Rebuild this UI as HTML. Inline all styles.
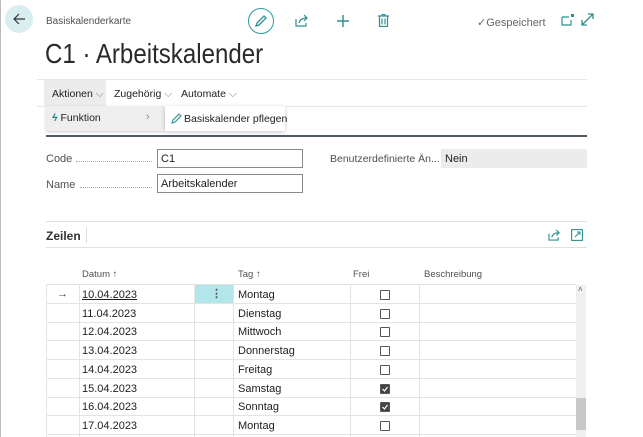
<!DOCTYPE html>
<html><head><meta charset="utf-8"><style>
*{margin:0;padding:0;box-sizing:border-box}
body{width:643px;height:437px;background:#fff;font-family:"Liberation Sans",sans-serif;color:#212121;position:relative;overflow:hidden;font-size:11px}
.a{position:absolute}
.t{white-space:nowrap}
.g{color:#505050}
.dots{border-bottom:1px dotted #aaa}
.inp{border:1px solid #8a8a8a;background:#fff;padding:3px 0 0 3px;height:19px}
.row{position:absolute;left:46px;width:530px;height:19px;border-bottom:1px solid #e4e4e4}
.cb{position:absolute;left:334px;width:10px;height:10px;border:1px solid #555;border-radius:1px}
.cb.on{background:#444}
</style></head><body>
<div class="a" style="left:0;top:0;width:1px;height:437px;background:#bbb"></div>
<div class="a" style="left:5px;top:5px;width:28px;height:28px;border-radius:50%;background:#d9eef0"></div>
<svg class="a" style="left:12px;top:12px" width="14" height="14" viewBox="0 0 14 14"><path d="M13 7H2M7 2L2 7l5 5" fill="none" stroke="#333" stroke-width="1.2"/></svg>
<div class="a t g" style="left:46px;top:16px;font-size:10px">Basiskalenderkarte</div>
<div class="a" style="left:248px;top:8px;width:26px;height:26px;border-radius:50%;border:1.5px solid #2f9c9c"></div>
<svg class="a" style="left:254px;top:14px" width="14" height="14" viewBox="0 0 14 14"><path d="M2 12l1-3 7-7 2 2-7 7z" fill="none" stroke="#2f8f8f" stroke-width="1.3"/></svg>
<svg class="a" style="left:295px;top:14px" width="14" height="13" viewBox="0 0 14 13"><path d="M1 5v7h10v-3M4 9c1-4 4-5 8-5M9 1l3 3-3 3" fill="none" stroke="#2f8f8f" stroke-width="1.2"/></svg>
<svg class="a" style="left:337px;top:15px" width="12" height="12" viewBox="0 0 12 12"><path d="M6 0v12M0 6h12" stroke="#2f8f8f" stroke-width="1.4"/></svg>
<svg class="a" style="left:378px;top:14px" width="11" height="13" viewBox="0 0 11 13"><path d="M0 2h11M4 2V0.5h3V2M1.5 2v10.5h8V2M4 4.5v6M7 4.5v6" fill="none" stroke="#2f8f8f" stroke-width="1.2"/></svg>
<div class="a t" style="left:477px;top:16px;font-size:11px;color:#666">✓Gespeichert</div>
<svg class="a" style="left:561px;top:14px" width="13" height="12" viewBox="0 0 13 12"><path d="M1 3h7M1 3v8h9V6" fill="none" stroke="#2f8f8f" stroke-width="1.2"/><rect x="10" y="0" width="3" height="3" fill="#2f8f8f"/></svg>
<svg class="a" style="left:581px;top:13px" width="13" height="13" viewBox="0 0 13 13"><path d="M1 12L12 1M7 1h5v5M1 7v5h5" fill="none" stroke="#2f8f8f" stroke-width="1.3"/></svg>
<div class="a t" style="left:45px;top:38px;font-size:28px;color:#2a2a2a;transform:scaleX(0.86);transform-origin:0 0">C1 · Arbeitskalender</div>
<div class="a" style="left:37px;top:79px;width:550px;height:1px;background:#e6e6e6"></div>
<div class="a" style="left:37px;top:106px;width:550px;height:1px;background:#e6e6e6"></div>
<div class="a" style="left:44px;top:80px;width:62px;height:26px;background:#ececec"></div>
<div class="a t" style="left:52px;top:88px;font-size:10.5px">Aktionen <span style="color:#888">⌵</span></div>
<div class="a t" style="left:114px;top:88px;font-size:10.5px">Zugehörig <span style="color:#888">⌵</span></div>
<div class="a t" style="left:181px;top:88px;font-size:10.5px">Automate <span style="color:#888">⌵</span></div>
<div class="a" style="left:46px;top:106px;width:119px;height:25px;background:#eee;box-shadow:0 1px 3px rgba(0,0,0,.2)"></div>
<div class="a t" style="left:52px;top:112px;font-size:10.5px"><span style="color:#1a8a8a;font-style:italic;font-weight:bold">ϟ</span> Funktion</div>
<div class="a t" style="left:146px;top:111px;color:#888">›</div>
<div class="a" style="left:165px;top:106px;width:120px;height:25px;background:#fff;box-shadow:0 1px 4px rgba(0,0,0,.22)"></div>
<svg class="a" style="left:171px;top:112px" width="12" height="12" viewBox="0 0 12 12"><path d="M1 11l1-3 6-6 2 2-6 6z" fill="none" stroke="#2f8f8f" stroke-width="1.1"/></svg>
<div class="a t" style="left:184px;top:113px;font-size:10.5px">Basiskalender pflegen</div>
<div class="a" style="left:46px;top:135px;width:541px;height:2px;background:#505a64"></div>
<div class="a t g" style="left:46px;top:153px">Code</div>
<div class="a dots" style="left:76px;top:161px;width:76px"></div>
<div class="a inp" style="left:157px;top:149px;width:146px">C1</div>
<div class="a t g" style="left:46px;top:179px">Name</div>
<div class="a dots" style="left:80px;top:187px;width:72px"></div>
<div class="a inp" style="left:157px;top:174px;width:146px">Arbeitskalender</div>
<div class="a t g" style="left:330px;top:153px;font-size:10.5px">Benutzerdefinierte Än...</div>
<div class="a" style="left:441px;top:149px;width:146px;height:19px;background:#ececec;padding:4px 0 0 4px">Nein</div>
<div class="a" style="left:46px;top:221px;width:541px;height:1px;background:#e0e0e0"></div>
<div class="a t" style="left:46px;top:229px;font-size:12px;font-weight:bold;color:#333">Zeilen</div>
<div class="a" style="left:86px;top:227px;width:1px;height:16px;background:#ddd"></div>
<svg class="a" style="left:548px;top:229px" width="13" height="12" viewBox="0 0 14 13"><path d="M1 5v7h10v-3M4 9c1-4 4-5 8-5M9 1l3 3-3 3" fill="none" stroke="#2f8f8f" stroke-width="1.2"/></svg>
<svg class="a" style="left:571px;top:229px" width="12" height="12" viewBox="0 0 12 12"><rect x="0.6" y="0.6" width="10.8" height="10.8" fill="none" stroke="#2f8f8f" stroke-width="1.1"/><path d="M4 8l5-5M6 3h3v3" fill="none" stroke="#2f8f8f" stroke-width="1"/></svg>
<div class="a" style="left:46px;top:247px;width:541px;height:1px;background:#e0e0e0"></div>
<div class="a t g" style="left:82px;top:269px;font-size:9.5px">Datum ↑</div>
<div class="a t g" style="left:238px;top:269px;font-size:9.5px">Tag ↑</div>
<div class="a t g" style="left:353px;top:269px;font-size:9.5px">Frei</div>
<div class="a t g" style="left:424px;top:269px;font-size:9.5px">Beschreibung</div>
<div class="a" style="left:46px;top:284px;width:530px;height:1px;background:#e0e0e0"></div>
<div class="a" style="left:46px;top:284px;width:1px;height:153px;background:#e4e4e4"></div>
<div class="a" style="left:79px;top:284px;width:1px;height:153px;background:#e4e4e4"></div>
<div class="a" style="left:194px;top:284px;width:1px;height:153px;background:#e4e4e4"></div>
<div class="a" style="left:233px;top:284px;width:1px;height:153px;background:#e4e4e4"></div>
<div class="a" style="left:350px;top:284px;width:1px;height:153px;background:#e4e4e4"></div>
<div class="a" style="left:419px;top:284px;width:1px;height:153px;background:#e4e4e4"></div>
<div class="a" style="left:195px;top:285px;width:38px;height:18px;background:#b3e6ea"></div>
<div class="a t" style="left:211px;top:287px;font-weight:bold;color:#555">⋮</div>
<div class="a t" style="left:57px;top:288px;color:#444">→</div>
<div class="a" style="left:576px;top:285px;width:10px;height:152px;background:#f0f0f0"></div>
<div class="a t" style="left:578px;top:285px;font-size:8px;color:#555">˄</div>
<div class="a" style="left:576px;top:398px;width:10px;height:32px;background:#c8c8c8"></div>
<div style="position:absolute;left:0;top:285px">
<div class="row" style="top:0"><span class="a t" style="left:36px;top:4px;text-decoration:underline">10.04.2023</span><span class="a t" style="left:192px;top:4px">Montag</span><span class="cb" style="top:5px"></span></div>
<div class="row" style="top:18.7px"><span class="a t" style="left:36px;top:4px">11.04.2023</span><span class="a t" style="left:192px;top:4px">Dienstag</span><span class="cb" style="top:5px"></span></div>
<div class="row" style="top:37.4px"><span class="a t" style="left:36px;top:4px">12.04.2023</span><span class="a t" style="left:192px;top:4px">Mittwoch</span><span class="cb" style="top:5px"></span></div>
<div class="row" style="top:56.1px"><span class="a t" style="left:36px;top:4px">13.04.2023</span><span class="a t" style="left:192px;top:4px">Donnerstag</span><span class="cb" style="top:5px"></span></div>
<div class="row" style="top:74.8px"><span class="a t" style="left:36px;top:4px">14.04.2023</span><span class="a t" style="left:192px;top:4px">Freitag</span><span class="cb" style="top:5px"></span></div>
<div class="row" style="top:93.5px"><span class="a t" style="left:36px;top:4px">15.04.2023</span><span class="a t" style="left:192px;top:4px">Samstag</span><span class="cb on" style="top:5px"><svg width="8" height="8" viewBox="0 0 8 8" style="display:block"><path d="M1.5 4l2 2 3-4" fill="none" stroke="#fff" stroke-width="1.2"/></svg></span></div>
<div class="row" style="top:112.2px"><span class="a t" style="left:36px;top:4px">16.04.2023</span><span class="a t" style="left:192px;top:4px">Sonntag</span><span class="cb on" style="top:5px"><svg width="8" height="8" viewBox="0 0 8 8" style="display:block"><path d="M1.5 4l2 2 3-4" fill="none" stroke="#fff" stroke-width="1.2"/></svg></span></div>
<div class="row" style="top:130.9px"><span class="a t" style="left:36px;top:4px">17.04.2023</span><span class="a t" style="left:192px;top:4px">Montag</span><span class="cb" style="top:5px"></span></div>
</div>
</body></html>
